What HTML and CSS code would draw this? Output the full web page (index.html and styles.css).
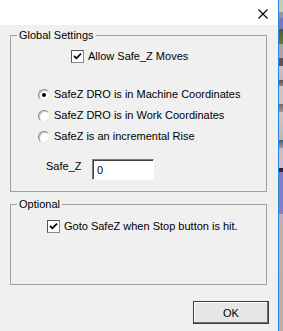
FILE: index.html
```html
<!DOCTYPE html>
<html>
<head>
<meta charset="utf-8">
<link rel="stylesheet" href="styles.css">
</head>
<body>
<div class="screen">
  <div class="window">
    <div class="titlebar">
      <svg class="close" width="10" height="10" viewBox="0 0 10 10"><path d="M0.5 0.5 L9.5 9.5 M9.5 0.5 L0.5 9.5" stroke="#000" stroke-width="1.1" fill="none"/></svg>
    </div>
    <div class="content">
      <fieldset class="group group-global">
        <legend>Global Settings</legend>
        <div class="check-row allow-row">
          <span class="checkbox checked"><svg width="9" height="9" viewBox="0 0 9 9"><path d="M1 3.8 L3.4 6.3 L8 1.6" stroke="#000" stroke-width="1.7" fill="none"/></svg></span>
          <span class="label">Allow Safe_Z Moves</span>
        </div>
        <div class="radios">
          <div class="radio-row"><span class="radio checked"></span><span class="label">SafeZ DRO is in Machine Coordinates</span></div>
          <div class="radio-row"><span class="radio"></span><span class="label">SafeZ DRO is in Work Coordinates</span></div>
          <div class="radio-row"><span class="radio"></span><span class="label">SafeZ is an incremental Rise</span></div>
        </div>
        <div class="field-row">
          <span class="field-label">Safe_Z</span>
          <span class="textbox">0</span>
        </div>
      </fieldset>
      <fieldset class="group group-optional">
        <legend>Optional</legend>
        <div class="check-row goto-row">
          <span class="checkbox checked"><svg width="9" height="9" viewBox="0 0 9 9"><path d="M1 3.8 L3.4 6.3 L8 1.6" stroke="#000" stroke-width="1.7" fill="none"/></svg></span>
          <span class="label">Goto SafeZ when Stop button is hit.</span>
        </div>
      </fieldset>
      <div class="buttons">
        <button class="ok">OK</button>
      </div>
    </div>
  </div>
  <div class="desktop"></div>
</div>
</body>
</html>
```

FILE: styles.css
```css
html, body {
  margin: 0;
  padding: 0;
}
body {
  width: 283px;
  height: 331px;
  overflow: hidden;
  font-family: "Liberation Sans", Arial, sans-serif;
  font-size: 11px;
  line-height: 13px;
  color: #000;
}
.screen {
  display: flex;
  height: 331px;
}
.window {
  width: 278px;
  border-right: 1px solid #2a86da;
  background: #f0f0f0;
  display: flex;
  flex-direction: column;
}
.titlebar {
  height: 25px;
  background: #fff;
  display: flex;
  justify-content: flex-end;
  align-items: flex-start;
}
.close {
  margin-top: 9px;
  margin-right: 10px;
}
.desktop {
  flex: 1;
  background: linear-gradient(to bottom,
    #c4cbbd 0, #c4cbbd 12px,
    #8d98a8 12px, #8d98a8 18px,
    #737cb4 18px, #737cb4 29px,
    #4b5a2c 29px, #6b7a3a 44px,
    #a4a6ae 44px, #a4a6ae 58px,
    #545668 58px, #545668 66px,
    #c6c6cc 66px, #b8b8c0 80px,
    #555 80px, #888 86px,
    #c8c8cc 86px, #c8c8cc 104px,
    #6a6a70 104px, #9a9aa0 112px,
    #cacacd 112px, #b8b8bc 140px,
    #3a5a8a 140px, #9aa0b0 148px,
    #c0c0c4 148px, #c4c4c8 168px,
    #222 168px, #333 172px,
    #7a82c4 172px, #7a82c4 214px,
    #b8b4ac 214px, #b6b2aa 331px);
}
.content {
  padding: 4px 11px 0 10px;
}
.group {
  margin: 0;
  padding: 0;
  border: 1px solid #a0a0a0;
  min-width: 0;
}
.group legend {
  margin-left: 6px;
  padding: 0 2px;
  line-height: 13px;
}
.check-row, .radio-row {
  display: flex;
  align-items: center;
  height: 13px;
}
.allow-row {
  margin-top: 8px;
  margin-left: 60px;
}
.checkbox {
  width: 11px;
  height: 11px;
  border: 1px solid;
  border-color: #555 #8a8a8a #8a8a8a #555;
  background: #fff;
  display: flex;
  align-items: center;
  justify-content: center;
  flex: none;
}
.check-row .label {
  margin-left: 4px;
}
.radios {
  margin-top: 25px;
  margin-left: 27px;
  display: flex;
  flex-direction: column;
  gap: 8px;
}
.radio {
  width: 10px;
  height: 10px;
  border: 1px solid;
  border-color: #8a8a8a #e8e8e8 #e8e8e8 #8a8a8a;
  border-radius: 50%;
  background: #fff;
  box-shadow: inset 1px 1px 0 #c8c8c8;
  display: flex;
  align-items: center;
  justify-content: center;
  flex: none;
}
.radio.checked::after {
  content: "";
  width: 4px;
  height: 4px;
  border-radius: 50%;
  background: #000;
}
.radio-row .label {
  margin-left: 4px;
}
.field-row {
  margin-top: 16px;
  margin-left: 35px;
  margin-bottom: 11px;
  display: flex;
  align-items: flex-start;
}
.field-label {
  margin-top: 1px;
  width: 46px;
}
.textbox {
  width: 56px;
  height: 19px;
  border: 1px solid;
  border-color: #7a7a7a #fff #fff #7a7a7a;
  box-shadow: inset 1px 1px 0 #404040;
  background: #fff;
  padding-left: 4px;
  line-height: 21px;
  box-sizing: content-box;
}
.group-optional {
  margin-top: 6px;
}
.goto-row {
  margin-top: 9px;
  margin-left: 36px;
  margin-bottom: 51px;
}
.buttons {
  display: flex;
  justify-content: flex-end;
  margin-top: 16px;
  margin-right: -2px;
}
.ok {
  width: 76px;
  height: 23px;
  margin: 0;
  padding: 0;
  border: 1px solid #3c3c3c;
  background: #e6e6e6;
  box-shadow: inset -1px -1px 0 #6e6e6e, inset 1px 1px 0 #fff;
  font-family: "Liberation Sans", Arial, sans-serif;
  font-size: 11px;
  color: #000;
}
```
